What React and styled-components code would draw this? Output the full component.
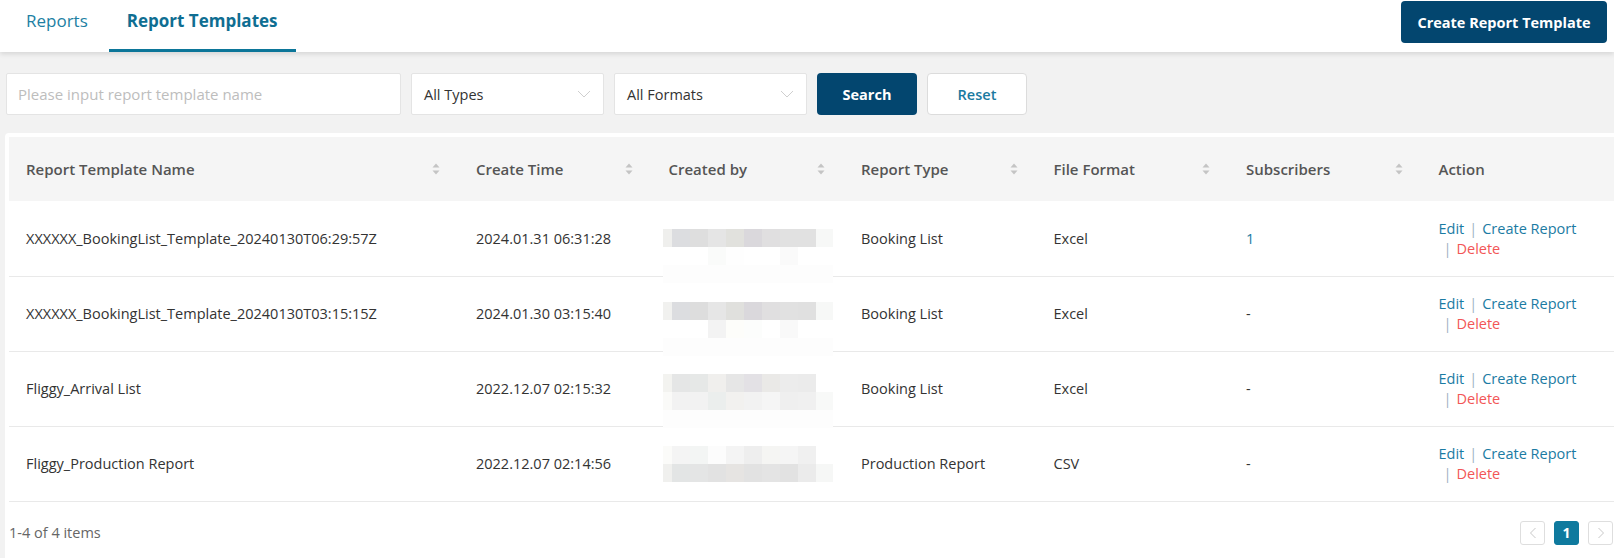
import React from "react";
import styled, { createGlobalStyle } from "styled-components";

const GlobalStyle = createGlobalStyle`
  html, body {
    margin: 0;
    padding: 0;
    background: #f2f2f2;
    font-family: "Open Sans", "Noto Sans", Arial, sans-serif;
    font-size: 14.5px;
    color: #333;
  }
  * { box-sizing: border-box; }
`;

const rows = [
  {
    name: "XXXXXX_BookingList_Template_20240130T06:29:57Z",
    time: "2024.01.31 06:31:28",
    type: "Booking List",
    format: "Excel",
    subs: "1",
    blurTop: 28,
    blur: [
      ["#efefed", "#dcdde0", "#dedede", "#e5e5e5", "#e1e1dd", "#dad8dc", "#e0dfe0", "#e1e1e1", "#e1e1e1", "#f7f8f7"],
      ["#ffffff", "#ffffff", "#ffffff", "#fafbfa", "#fefefe", "#ffffff", "#ffffff", "#fafafa", "#ffffff", "#ffffff"],
      ["#fdfdfd", "#fdfdfd", "#fdfdfd", "#fdfdfd", "#fdfdfd", "#fdfdfd", "#fdfdfd", "#fdfdfd", "#fdfdfd", "#fdfdfd"],
    ],
  },
  {
    name: "XXXXXX_BookingList_Template_20240130T03:15:15Z",
    time: "2024.01.30 03:15:40",
    type: "Booking List",
    format: "Excel",
    subs: "-",
    blurTop: 25,
    blur: [
      ["#f1f1ef", "#dcdde0", "#dddddd", "#e6e6e6", "#e0e0dd", "#dad8dc", "#e0dfe0", "#e1e1e1", "#e0e0e0", "#f7f8f7"],
      ["#ffffff", "#ffffff", "#ffffff", "#f3f3f3", "#fdfdfa", "#fcfdfc", "#ffffff", "#f9f9f9", "#ffffff", "#ffffff"],
      ["#fdfdfd", "#fdfdfd", "#fdfdfd", "#fdfdfd", "#fdfdfd", "#fdfdfd", "#fdfdfd", "#fdfdfd", "#fdfdfd", "#fdfdfd"],
    ],
  },
  {
    name: "Fliggy_Arrival List",
    time: "2022.12.07 02:15:32",
    type: "Booking List",
    format: "Excel",
    subs: "-",
    blurTop: 22,
    blur: [
      ["#f3f3f0", "#e5e6e6", "#e6e8e7", "#f0efed", "#e6e6e6", "#e3e1e5", "#eae9e7", "#ececec", "#ebebeb", "#ffffff"],
      ["#fafaf8", "#f2f2f2", "#f2f2f2", "#ebeeed", "#f2f1ef", "#f2f2f2", "#f5f5f5", "#efefef", "#f0f0f0", "#f8f9f8"],
      ["#fdfdfd", "#fdfdfd", "#fdfdfd", "#fdfdfd", "#fdfdfd", "#fdfdfd", "#fdfdfd", "#fdfdfd", "#fdfdfd", "#fdfdfd"],
    ],
  },
  {
    name: "Fliggy_Production Report",
    time: "2022.12.07 02:14:56",
    type: "Production Report",
    format: "CSV",
    subs: "-",
    blurTop: 19,
    blur: [
      ["#fbfbf9", "#f4f4f4", "#f3f5f4", "#fcfcfc", "#f4f4f4", "#eeeeee", "#f5f5f3", "#f5f5f5", "#f0f0f0", "#ffffff"],
      ["#f0f0ee", "#e3e5e5", "#e4e5e5", "#e2e2e2", "#e6e4e2", "#e2e2e2", "#e4e4e4", "#e2e2e2", "#ebebeb", "#f6f7f6"],
    ],
  },
];

const columns = [
  { title: "Report Template Name", sortable: true },
  { title: "Create Time", sortable: true },
  { title: "Created by", sortable: true },
  { title: "Report Type", sortable: true },
  { title: "File Format", sortable: true },
  { title: "Subscribers", sortable: true },
  { title: "Action", sortable: false },
];

const SortIcon = () => (
  <svg width="8" height="14" viewBox="0 0 8 14">
    <path d="M4 1.5 L7.5 5.5 L0.5 5.5 Z" fill="#c4c4c4" />
    <path d="M4 12.5 L7.5 8.5 L0.5 8.5 Z" fill="#c4c4c4" />
  </svg>
);

const Chevron = () => (
  <svg width="14" height="8" viewBox="0 0 14 8">
    <path d="M1 1 L7 7 L13 1" fill="none" stroke="#cfcfcf" strokeWidth="1" />
  </svg>
);

const PageArrow = ({ dir }) => (
  <svg width="8" height="12" viewBox="0 0 8 12">
    <path
      d={dir === "left" ? "M6.5 1 L1.5 6 L6.5 11" : "M1.5 1 L6.5 6 L1.5 11"}
      fill="none"
      stroke="#c8c8c8"
      strokeWidth="1"
    />
  </svg>
);

const blurWidths = [9, 18, 18, 18, 18, 18, 18, 18, 18, 17];

const Blur = ({ grid, top }) => {
  let x = 0;
  const xs = blurWidths.map((w) => {
    const s = x;
    x += w;
    return s;
  });
  return (
    <BlurSvg $top={top} width="170" height={grid.length * 18} viewBox={`0 0 170 ${grid.length * 18}`}>
      {grid.map((r, ri) =>
        r.map((c, ci) => (
          <rect key={`${ri}-${ci}`} x={xs[ci]} y={ri * 18} width={blurWidths[ci]} height="18" fill={c} />
        ))
      )}
    </BlurSvg>
  );
};

export default function App() {
  return (
    <>
      <GlobalStyle />
      <Header>
        <Tabs>
          <Tab>Reports</Tab>
          <Tab $active>Report Templates</Tab>
        </Tabs>
        <PrimaryButton $wide>Create Report Template</PrimaryButton>
      </Header>

      <Filters>
        <TextInput placeholder="Please input report template name" />
        <Select>
          <span>All Types</span>
          <Chevron />
        </Select>
        <Select>
          <span>All Formats</span>
          <Chevron />
        </Select>
        <PrimaryButton>Search</PrimaryButton>
        <GhostButton>Reset</GhostButton>
      </Filters>

      <Card>
        <Table>
          <colgroup>
            <col style={{ width: 450 }} />
            <col style={{ width: 192.5 }} />
            <col style={{ width: 192.5 }} />
            <col style={{ width: 192.5 }} />
            <col style={{ width: 192.5 }} />
            <col style={{ width: 192.5 }} />
            <col />
          </colgroup>
          <thead>
            <tr>
              {columns.map((c) => (
                <Th key={c.title}>
                  <HeadCell>
                    <span>{c.title}</span>
                    {c.sortable && <SortIcon />}
                  </HeadCell>
                </Th>
              ))}
            </tr>
          </thead>
          <tbody>
            {rows.map((r) => (
              <tr key={r.name}>
                <Td>{r.name}</Td>
                <Td>{r.time}</Td>
                <Td $top>
                  <Blur grid={r.blur} top={r.blurTop} />
                </Td>
                <Td>{r.type}</Td>
                <Td>{r.format}</Td>
                <Td>{r.subs === "-" ? "-" : <Link>{r.subs}</Link>}</Td>
                <Td>
                  <Actions>
                    <Link>Edit</Link>
                    <Sep>|</Sep>
                    <Link>Create Report</Link>{" "}
                    <NoWrap>
                      <Sep>|</Sep>
                      <Link $danger>Delete</Link>
                    </NoWrap>
                  </Actions>
                </Td>
              </tr>
            ))}
          </tbody>
        </Table>
        <Footer>
          <Total>1-4 of 4 items</Total>
          <Pager>
            <PageBox>
              <PageArrow dir="left" />
            </PageBox>
            <PageBox $active>1</PageBox>
            <PageBox>
              <PageArrow dir="right" />
            </PageBox>
          </Pager>
        </Footer>
      </Card>
    </>
  );
}

const Header = styled.div`
  height: 52px;
  background: #fff;
  display: flex;
  justify-content: space-between;
  align-items: flex-start;
  box-shadow: 0 2px 5px rgba(0, 0, 0, 0.12);
  position: relative;
  z-index: 1;
`;

const Tabs = styled.div`
  display: flex;
  gap: 3px;
  padding-left: 8px;
`;

const Tab = styled.div`
  height: 52px;
  padding: 9px 18px 0;
  line-height: 23px;
  font-size: 17px;
  font-weight: ${(p) => (p.$active ? 700 : 400)};
  color: ${(p) => (p.$active ? "#0f6e92" : "#217fa3")};
  border-bottom: 3px solid ${(p) => (p.$active ? "#0c7699" : "transparent")};
  cursor: pointer;
`;

const PrimaryButton = styled.button`
  height: 42px;
  width: ${(p) => (p.$wide ? "206px" : "100px")};
  margin: ${(p) => (p.$wide ? "1px 7px 0 0" : "0")};
  border: none;
  border-radius: 4px;
  background: #03466f;
  color: #fff;
  font-family: inherit;
  font-size: 14.5px;
  font-weight: 700;
  cursor: pointer;
`;

const GhostButton = styled.button`
  height: 42px;
  width: 100px;
  border: 1px solid #dcdcdc;
  border-radius: 4px;
  background: #fff;
  color: #1b7aa0;
  font-family: inherit;
  font-size: 14.5px;
  font-weight: 600;
  cursor: pointer;
`;

const Filters = styled.div`
  display: flex;
  gap: 10px;
  padding: 21px 0 0 6px;
`;

const TextInput = styled.input`
  width: 395px;
  height: 42px;
  border: 1px solid #e4e4e4;
  border-radius: 2px;
  padding: 0 11px;
  font-family: inherit;
  font-size: 15px;
  color: #333;
  outline: none;
  &::placeholder {
    color: #bdbdbd;
  }
`;

const Select = styled.div`
  width: 193px;
  height: 42px;
  background: #fff;
  border: 1px solid #e4e4e4;
  border-radius: 2px;
  padding: 0 12px 0 12px;
  display: flex;
  align-items: center;
  justify-content: space-between;
  color: #333;
  font-size: 14.5px;
`;

const Card = styled.div`
  margin: 18px 0 0 5px;
  background: #fff;
  border-radius: 4px 0 0 0;
  padding: 4px 0 0 4px;
  min-height: 430px;
`;

const Table = styled.table`
  width: 100%;
  border-collapse: collapse;
  table-layout: fixed;
`;

const Th = styled.th`
  height: 64px;
  background: #f5f5f5;
  padding: 0 19px 0 17px;
  text-align: left;
  font-weight: 600;
  font-size: 15px;
  color: #555;
`;

const HeadCell = styled.div`
  display: flex;
  align-items: center;
  justify-content: space-between;
`;

const Td = styled.td`
  height: 75px;
  padding: ${(p) => (p.$top ? "0" : "0 16px 0 17px")};
  border-bottom: 1px solid #e9e9e9;
  vertical-align: ${(p) => (p.$top ? "top" : "middle")};
  font-size: 14.5px;
  color: #333;
  white-space: nowrap;
`;

const BlurSvg = styled.svg`
  display: block;
  margin: ${(p) => p.$top}px 0 0 11px;
  height: ${(p) => p.height}px;
  margin-bottom: -${(p) => p.$top + p.height - 74}px;
`;

const Actions = styled.div`
  white-space: normal;
  line-height: 20px;
  padding-top: 1px;
`;

const NoWrap = styled.span`
  white-space: nowrap;
`;

const Link = styled.a`
  color: ${(p) => (p.$danger ? "#f25656" : "#1b7ba3")};
  cursor: pointer;
`;

const Sep = styled.span`
  display: inline-block;
  margin: 0 5px 0 5px;
  color: #9fb3c2;
`;

const Footer = styled.div`
  height: 62px;
  display: flex;
  align-items: center;
  justify-content: space-between;
  padding-right: 1px;
`;

const Total = styled.span`
  font-size: 14.5px;
  color: #666;
`;

const Pager = styled.div`
  display: flex;
  gap: 9px;
`;

const PageBox = styled.div`
  width: 25px;
  height: 24px;
  border-radius: 3px;
  border: 1px solid ${(p) => (p.$active ? "#0f7a9e" : "#dedede")};
  background: ${(p) => (p.$active ? "#0f7a9e" : "#fff")};
  color: #fff;
  font-weight: 700;
  font-size: 14px;
  display: flex;
  align-items: center;
  justify-content: center;
`;
